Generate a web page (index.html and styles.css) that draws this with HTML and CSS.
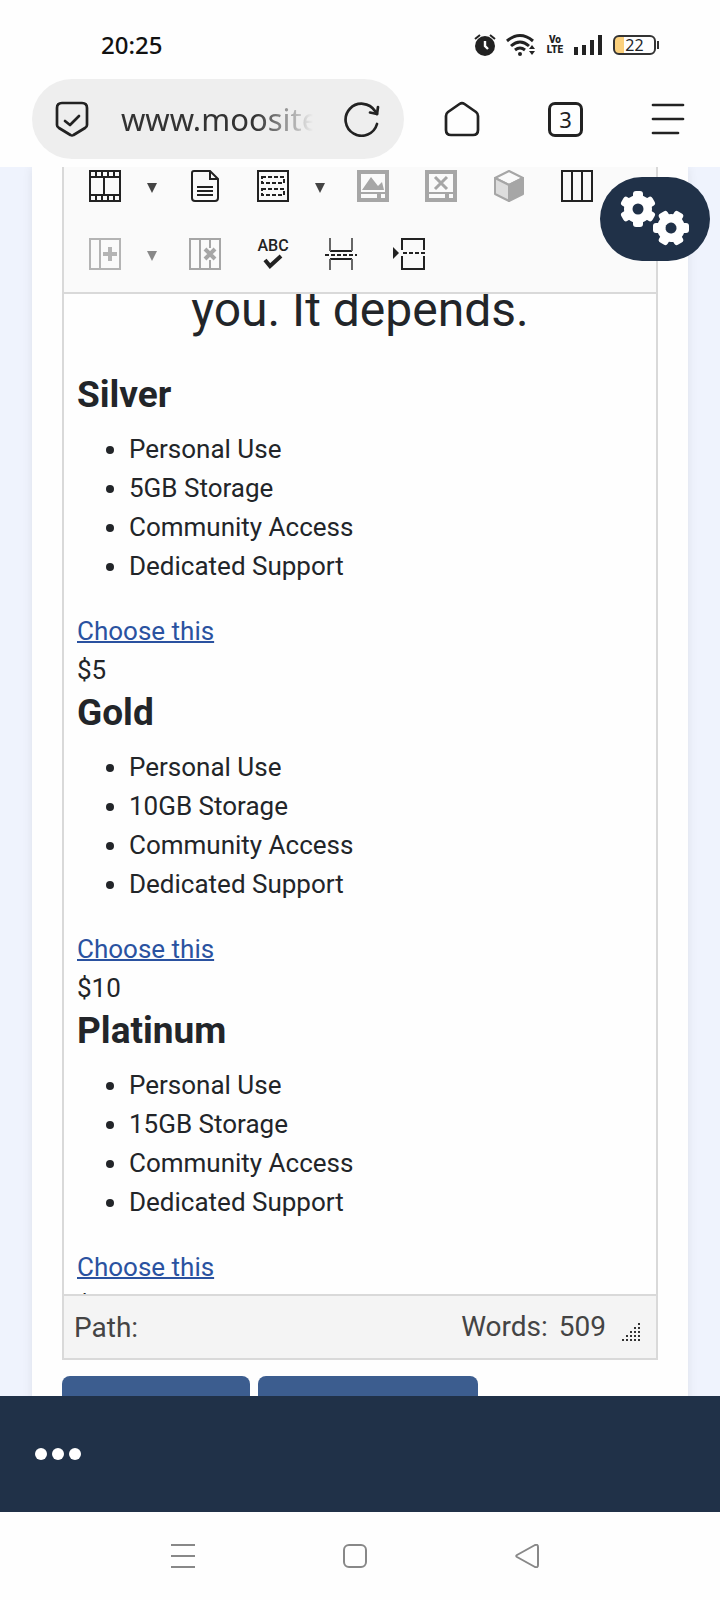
FILE: index.html
```html
<!DOCTYPE html>
<html lang="en">
<head>
    <meta charset="UTF-8">
    <meta name="viewport" content="width=device-width, initial-scale=1.0">
    <title>Pricing editor</title>
    <link rel="stylesheet" href="styles.css">
</head>
<body>
    <header class="top">
        <div class="status-bar">
            <div class="clock">20:25</div>
            <div class="status-icons">
                <svg width="22" height="24" viewBox="0 0 22 24">
                    <circle cx="11" cy="13" r="10" fill="#222"/>
                    <path d="M1 6l5-4M21 6l-5-4" stroke="#222" stroke-width="2" fill="none"/>
                    <path d="M11 8v5l3 3" stroke="#fff" stroke-width="2.4" fill="none"/>
                </svg>
                <svg width="30" height="24" viewBox="0 0 30 24">
                    <g fill="none" stroke="#222" stroke-width="3">
                        <path d="M1 8Q14-3 27 8"/>
                        <path d="M5 13q9-8 18 0"/>
                        <path d="M9 17q5-4 10 0"/>
                    </g>
                    <circle cx="14" cy="21" r="2" fill="#222"/>
                    <path d="M23 16l3-4 3 4zM23 18l3 4 3-4z" fill="#222"/>
                </svg>
                <div class="volte"><span>Vo</span><span>LTE</span></div>
                <svg width="29" height="20" viewBox="0 0 29 20">
                    <path d="M0 12h4v8H0zM8 10h4v10H8zM16 5h4v15h-4zM24 0h4v20h-4z" fill="#222"/>
                </svg>
                <div class="battery">22</div>
            </div>
        </div>
        <div class="browser-bar">
            <div class="address">
                <svg width="34" height="36" viewBox="0 0 34 36" fill="none" stroke="#222" stroke-width="2.700" stroke-linejoin="round" stroke-linecap="round">
                    <path d="M7 2h20q5 0 5 5v17q0 2-2 3L18.500 34q-1.500 1-3 0L4 27q-2-1-2-3V7q0-5 5-5z"/>
                    <path d="M10 20l5 4 9-9"/>
                </svg>
                <input class="url" type="text" value="www.moosite" aria-label="Address" readonly>
                <button class="icon-button" aria-label="Reload">
                    <svg width="36" height="36" viewBox="0 0 36 36" fill="none" stroke="#222" stroke-width="2.700" stroke-linecap="round" stroke-linejoin="round">
                        <path d="M33 23A16 16 0 1 1 31 10l2 3"/>
                        <path d="M34 6l-1 7-7-1.500"/>
                    </svg>
                </button>
            </div>
            <button class="icon-button home" aria-label="Home">
                <svg width="36" height="36" viewBox="0 0 36 36" fill="none" stroke="#222" stroke-width="2.700" stroke-linejoin="round">
                    <path d="M2 15q0-2.500 2-4L15.500 3q2.500-1.800 5 0L32 11q2 1.500 2 4v14q0 5-5 5H7q-5 0-5-5z"/>
                </svg>
            </button>
            <button class="tabs">3</button>
            <button class="icon-button" aria-label="Menu">
                <svg width="34" height="36" viewBox="0 0 34 36" stroke="#222" stroke-width="2.700" stroke-linecap="round">
                    <path d="M2 4h30M2 18h30M2 32h25"/>
                </svg>
            </button>
        </div>
    </header>

    <main class="content">
        <div class="card">
            <div class="editor">
                <div class="toolbar">
                    <button class="tool" aria-label="Media">
                        <svg width="32" height="32" viewBox="0 0 32 32" fill="none" stroke="#222" stroke-width="2">
                            <path d="M1 1h30v30H1zM1 7h30M1 25h30M15 7v18"/>
                            <path d="M7 1v6M13 1v6M19 1v6M25 1v6M7 25v6M13 25v6M19 25v6M25 25v6"/>
                        </svg>
                    </button>
                    <button class="caret" aria-label="Media options"></button>
                    <button class="tool" aria-label="Template">
                        <svg width="32" height="32" viewBox="0 0 32 32" fill="none" stroke="#222" stroke-width="2">
                            <path d="M5 1h16l8 8v19q0 3-3 3H6q-3 0-3-3V3q0-2 2-2zM21 1v8h8M8 17h16M8 21h16M8 25h16"/>
                        </svg>
                    </button>
                    <button class="tool" aria-label="Layout">
                        <svg width="32" height="32" viewBox="0 0 32 32" fill="none" stroke="#222" stroke-width="2">
                            <path d="M1 1h30v30H1z"/>
                            <path d="M5 7h22v6H5zM5 19h22v6H5z" stroke-dasharray="4 2"/>
                        </svg>
                    </button>
                    <button class="caret" aria-label="Layout options"></button>
                    <button class="tool" aria-label="Edit image">
                        <svg width="32" height="32" viewBox="0 0 32 32">
                            <path fill="#a6a6a6" fill-rule="evenodd" d="M0 0h32v32H0zM4 4h24v18H4zM4 24h16v4H4zM24 24h4v4h-4z"/>
                            <path fill="#a6a6a6" d="M5 20l9-13 7 9 4-4 2 8z"/>
                        </svg>
                    </button>
                    <button class="tool" aria-label="Remove image">
                        <svg width="32" height="32" viewBox="0 0 32 32">
                            <path fill="#a6a6a6" fill-rule="evenodd" d="M0 0h32v32H0zM4 4h24v18H4zM4 24h16v4H4zM24 24h4v4h-4z"/>
                            <path stroke="#a6a6a6" stroke-width="3" d="M10 7l12 12M22 7L10 19"/>
                        </svg>
                    </button>
                    <button class="tool" aria-label="Block">
                        <svg width="32" height="32" viewBox="0 0 32 32" stroke="#a6a6a6" stroke-width="2" stroke-linejoin="round">
                            <path fill="#fafafa" d="M16 1l14 7-14 7L2 8z"/>
                            <path fill="#ddd" d="M2 8l14 7v16L2 24z"/>
                            <path fill="#a6a6a6" d="M30 8l-14 7v16l14-7z"/>
                        </svg>
                    </button>
                    <button class="tool" aria-label="Columns">
                        <svg width="32" height="32" viewBox="0 0 32 32" fill="none" stroke="#222" stroke-width="2">
                            <path d="M1 1h30v30H1zM11 1v30M21 1v30"/>
                        </svg>
                    </button>
                    <button class="tool" aria-label="Add column">
                        <svg width="32" height="32" viewBox="0 0 32 32" fill="none" stroke="#b4b4b4" stroke-width="2">
                            <path d="M1 1h30v30H1zM11 1v30"/>
                            <path d="M14 16h14M21 9v14" stroke-width="4"/>
                        </svg>
                    </button>
                    <button class="caret light" aria-label="Add column options"></button>
                    <button class="tool" aria-label="Remove column">
                        <svg width="32" height="32" viewBox="0 0 32 32" fill="none" stroke="#a6a6a6" stroke-width="2">
                            <path d="M1 1h30v30H1zM11 1v30M21 1v9M21 22v9"/>
                            <path d="M16 11l10 10M26 11L16 21" stroke-width="4"/>
                        </svg>
                    </button>
                    <button class="tool spell" aria-label="Spell check">
                        <span>ABC</span>
                        <svg width="20" height="16" viewBox="0 0 20 16" fill="none" stroke="#222" stroke-width="4">
                            <path d="M2 6l5 6L18 2"/>
                        </svg>
                    </button>
                    <button class="tool" aria-label="Page break">
                        <svg width="32" height="32" viewBox="0 0 32 32" fill="none" stroke="#222" stroke-width="2">
                            <path d="M5 13h22M5 21h22"/>
                            <path d="M5 0v13M27 0v13M5 32V21M27 32V21" stroke="#666"/>
                            <path d="M0 17h32" stroke-dasharray="4 2"/>
                        </svg>
                    </button>
                    <button class="tool" aria-label="Insert break">
                        <svg width="32" height="32" viewBox="0 0 32 32" fill="none" stroke="#222" stroke-width="2">
                            <path d="M9 12V1h22v11M9 18v13h22V18"/>
                            <path d="M10 15h22" stroke-dasharray="4 2"/>
                            <path d="M0 9l6 6-6 6z" fill="#222" stroke="none"/>
                        </svg>
                    </button>
                </div>

                <div class="document">
                    <h2 class="lead">you. It depends.</h2>
                    <section class="plan">
                        <h3>Silver</h3>
                        <ul>
                            <li>Personal Use</li>
                            <li>5GB Storage</li>
                            <li>Community Access</li>
                            <li>Dedicated Support</li>
                        </ul>
                        <a href="#">Choose this</a>
                        <div>$5</div>
                    </section>
                    <section class="plan">
                        <h3>Gold</h3>
                        <ul>
                            <li>Personal Use</li>
                            <li>10GB Storage</li>
                            <li>Community Access</li>
                            <li>Dedicated Support</li>
                        </ul>
                        <a href="#">Choose this</a>
                        <div>$10</div>
                    </section>
                    <section class="plan">
                        <h3>Platinum</h3>
                        <ul>
                            <li>Personal Use</li>
                            <li>15GB Storage</li>
                            <li>Community Access</li>
                            <li>Dedicated Support</li>
                        </ul>
                        <a href="#">Choose this</a>
                        <div>$15</div>
                    </section>
                </div>

                <div class="editor-footer">
                    <span class="path">Path:</span>
                    <span class="words"><span>Words:</span> <span>509</span></span>
                    <svg class="grip" width="18" height="18" viewBox="0 0 18 18" stroke="#333" stroke-width="2" stroke-dasharray="2 2">
                        <path d="M1 18v-2M5 18v-6M9 18v-10M13 18V4M17 18V0"/>
                    </svg>
                </div>
            </div>
            <div class="actions">
                <button class="action save" aria-label="Save"></button>
                <button class="action cancel" aria-label="Cancel"></button>
            </div>
        </div>

        <button class="settings" aria-label="Settings">
            <svg width="70" height="56" viewBox="0 0 70 56">
                <defs>
                    <g id="gear">
                        <circle r="14"/>
                        <rect x="-5" y="-18" width="10" height="36" rx="3"/>
                        <rect x="-5" y="-18" width="10" height="36" rx="3" transform="rotate(60)"/>
                        <rect x="-5" y="-18" width="10" height="36" rx="3" transform="rotate(120)"/>
                        <circle r="5.500" fill="#203148"/>
                    </g>
                </defs>
                <use href="#gear" x="18" y="18" fill="#fff"/>
                <use href="#gear" fill="#fff" transform="translate(51 37) rotate(30)"/>
            </svg>
        </button>
    </main>

    <footer class="bottom-bar">
        <button class="more" aria-label="More"><i></i><i></i><i></i></button>
    </footer>
    <nav class="system-nav">
        <button class="icon-button" aria-label="Recent apps">
            <svg width="24" height="24" viewBox="0 0 24 24" stroke="#888" stroke-width="2"><path d="M0 1h24M0 12h24M0 23h24"/></svg>
        </button>
        <button class="icon-button" aria-label="Home screen">
            <svg width="24" height="24" viewBox="0 0 24 24" fill="none" stroke="#888" stroke-width="2"><rect x="1" y="1" width="22" height="22" rx="5"/></svg>
        </button>
        <button class="icon-button" aria-label="Back">
            <svg width="24" height="24" viewBox="0 0 24 24" fill="none" stroke="#888" stroke-width="2" stroke-linejoin="round"><path d="M2 11L20 1q3-1 3 2v18q0 3-3 2L2 13q-1.500-1 0-2z"/></svg>
        </button>
    </nav>
</body>
</html>
```
FILE: styles.css
```css
* {
    box-sizing: border-box;
}
body {
    margin: 0;
    height: 100vh;
    display: flex;
    flex-direction: column;
    font-family: Roboto, Arial, sans-serif;
    color: #222529;
    background-color: #fefefe;
}
svg {
    display: block;
    flex: none;
}
button {
    padding: 0;
    border: none;
    background: none;
    color: inherit;
    cursor: pointer;
}
.top {
    padding-bottom: 8px;
    background-color: #fefefe;
}
.status-bar {
    display: flex;
    justify-content: space-between;
    align-items: center;
    height: 79px;
    padding: 11px 64px 0 101px;
}
.clock {
    font-family: "Noto Sans", sans-serif;
    font-size: 24px;
    font-weight: 500;
    line-height: 32px;
    color: #111;
}
.status-icons {
    display: flex;
    align-items: center;
    gap: 10px;
}
.volte {
    display: flex;
    flex-direction: column;
    align-items: center;
    width: 18px;
    font-size: 10px;
    font-weight: 900;
    line-height: 10px;
    color: #222;
}
.battery {
    position: relative;
    width: 43px;
    height: 20px;
    border: 2px solid #333;
    border-radius: 6px;
    background: linear-gradient(to right, #fbd07c 9px, #fefefe 9px);
    font-family: "Noto Sans", sans-serif;
    font-size: 16px;
    line-height: 16px;
    text-align: center;
}
.battery::after {
    content: "";
    position: absolute;
    top: 4px;
    right: -5px;
    width: 2px;
    height: 8px;
    background-color: #333;
}
.browser-bar {
    display: flex;
    align-items: center;
    padding: 0 35px 0 32px;
    gap: 68px;
}
.address {
    flex: 1;
    min-width: 0;
    height: 80px;
    display: flex;
    align-items: center;
    padding: 0 24px 0 23px;
    border-radius: 40px;
    background-color: #eee;
}
.url {
    flex: 1;
    min-width: 0;
    margin: 0 31px 0 32px;
    padding: 0;
    border: none;
    outline: none;
    background: none;
    font-family: "Noto Sans", sans-serif;
    font-size: 31px;
    font-weight: 400;
    line-height: 44px;
    color: #333;
    -webkit-mask-image: linear-gradient(to right, #000 70%, transparent);
    mask-image: linear-gradient(to right, #000 70%, transparent);
}
.home {
    margin-left: -28px;
}
.tabs {
    width: 35px;
    height: 35px;
    border: 3px solid #222;
    border-radius: 7px;
    font-family: "Noto Sans", sans-serif;
    font-size: 22px;
    line-height: 28px;
    color: #222;
}
.content {
    position: relative;
    flex: 1;
    min-height: 0;
    overflow: hidden;
    padding: 0 32px;
    background-color: #eff3fd;
}
.card {
    display: flow-root;
    padding: 0 30px 30px;
    background-color: #fefefe;
    box-shadow: 0 0 10px rgba(0,0,0,0.08);
}
.editor {
    border: 2px solid #d9d9d9;
    border-top: none;
}
/* scrolled a little under the address bar */
.toolbar {
    display: flex;
    flex-wrap: wrap;
    margin-top: -15px;
    padding: 0 7px 4px;
    border-bottom: 2px solid #d9d9d9;
    background-color: #fafafa;
}
.tool {
    display: flex;
    justify-content: center;
    align-items: center;
    width: 68px;
    height: 68px;
}
.caret {
    width: 32px;
    height: 68px;
    padding: 4px 6px 0 0;
}
.caret::before {
    content: "";
    display: block;
    width: 0;
    margin: 0 auto;
    border: 5px solid transparent;
    border-top: 10px solid #444;
    border-bottom: none;
}
.caret.light::before {
    border-top-color: #888;
}
.spell {
    flex-direction: column;
    font-family: Roboto, sans-serif;
    font-size: 16px;
    font-weight: 500;
    line-height: 16px;
    color: #222;
}
.document {
    height: 1000px;
    overflow: hidden;
    padding: 0 13px;
    background-color: #fefefe;
    font-size: 26px;
    line-height: 39px;
}
.lead {
    margin: -12px 0 34px;
    font-size: 48px;
    font-weight: 400;
    line-height: 56px;
    text-align: center;
}
.plan h3 {
    margin: 0 0 12px;
    font-size: 37px;
    font-weight: 700;
    line-height: 46px;
}
.plan ul {
    margin: 0 0 26px;
    padding-left: 52px;
}
.plan a {
    color: #2a52a0;
    text-decoration-thickness: 2px;
}
.editor-footer {
    display: flex;
    align-items: center;
    height: 64px;
    padding: 0 16px 0 10px;
    border-top: 2px solid #d9d9d9;
    background-color: #f4f4f4;
    font-size: 28px;
    line-height: 36px;
    color: #444;
}
.path {
    padding-top: 2px;
}
.words {
    display: flex;
    gap: 11px;
    margin-left: auto;
}
.grip {
    margin: 10px 0 0 16px;
}
.actions {
    display: flex;
    gap: 8px;
    padding-top: 16px;
}
.action {
    height: 76px;
    border-radius: 8px;
    background-color: #3c5d8f;
}
.save {
    width: 188px;
}
.cancel {
    width: 220px;
}
.settings {
    position: absolute;
    top: 10px;
    right: 10px;
    display: flex;
    justify-content: center;
    align-items: center;
    width: 110px;
    height: 84px;
    border-radius: 42px;
    background-color: #203148;
}
.bottom-bar {
    display: flex;
    align-items: center;
    height: 116px;
    padding: 0 35px;
    background-color: #203148;
}
.more {
    display: flex;
    gap: 5px;
}
.more i {
    width: 12px;
    height: 12px;
    border-radius: 50%;
    background-color: #fff;
}
.system-nav {
    display: flex;
    justify-content: center;
    align-items: center;
    gap: 148px;
    height: 88px;
    padding-right: 10px;
}
```
